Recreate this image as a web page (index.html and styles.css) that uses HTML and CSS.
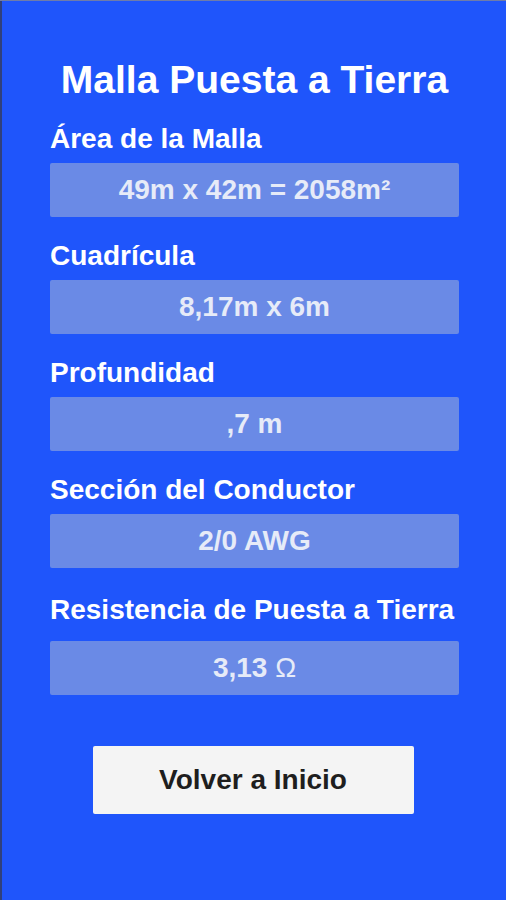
FILE: index.html
```html
<!DOCTYPE html>
<html lang="es">
  <head>
    <meta charset="utf-8" />
    <meta name="viewport" content="width=device-width,initial-scale=1" />
    <title>Malla Puesta a Tierra</title>
    <link rel="stylesheet" href="styles.css">
  </head>
  <body>
    <main class="screen">
      <h1 class="title">Malla Puesta a Tierra</h1>

      <section class="result">
        <h2 class="result-label">Área de la Malla</h2>
        <div class="result-value">49m x 42m = 2058m²</div>
      </section>

      <section class="result">
        <h2 class="result-label">Cuadrícula</h2>
        <div class="result-value">8,17m x 6m</div>
      </section>

      <section class="result">
        <h2 class="result-label">Profundidad</h2>
        <div class="result-value">,7 m</div>
      </section>

      <section class="result">
        <h2 class="result-label">Sección del Conductor</h2>
        <div class="result-value">2/0 AWG</div>
      </section>

      <section class="result result-last">
        <h2 class="result-label">Resistencia de Puesta a Tierra</h2>
        <div class="result-value">3,13 <span class="unit">Ω</span></div>
      </section>

      <button class="home-button" type="button">Volver a Inicio</button>
    </main>
  </body>
</html>
```

FILE: styles.css
```css
html {
  height: 100%;
  font-family: "Liberation Sans", Arial, Helvetica, sans-serif;
}

*,
:after,
:before {
  box-sizing: border-box;
}

body {
  margin: 0;
  height: 100%;
  background-color: #1f55fb;
}

.screen {
  display: flex;
  flex-direction: column;
  height: 900px;
  padding: 56px 47px 0 50px;
  border-top: 1px solid #6f7ca8;
  box-shadow: inset 2px 0 0 #30407c;
}

.title {
  margin: 0 0 20px 0;
  color: #fff;
  font-size: 39px;
  line-height: 46px;
  font-weight: bold;
  text-align: center;
}

.result {
  margin-bottom: 23px;
}

.result-label {
  margin: 0 0 8px 0;
  color: #fff;
  font-size: 28px;
  line-height: 32px;
  font-weight: bold;
}

.result-value {
  height: 54px;
  background-color: #6a8ae6;
  border-radius: 2px;
  color: #e6ebf8;
  font-size: 28px;
  line-height: 54px;
  font-weight: bold;
  text-align: center;
}

.result-value .unit {
  font-weight: normal;
}

.result-last {
  margin-top: 3px;
  margin-bottom: 51px;
}

.result-last .result-label {
  margin-bottom: 15px;
}

.home-button {
  align-self: center;
  width: 321px;
  height: 68px;
  margin-left: -3px;
  border: 0;
  border-radius: 2px;
  background-color: #f4f4f4;
  color: #1e1e1e;
  font-family: inherit;
  font-size: 28px;
  font-weight: bold;
}
```
